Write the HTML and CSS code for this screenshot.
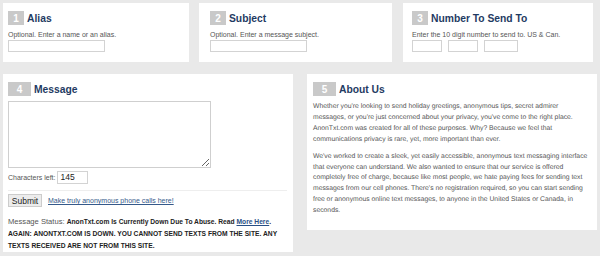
FILE: index.html
```html
<!DOCTYPE html>
<html>
<head>
<meta charset="utf-8">
<link rel="stylesheet" href="styles.css">
</head>
<body>
<div class="page">
  <div class="row-top">
    <div class="card card-sm c1">
      <div class="head"><span class="badge">1</span><span class="title">Alias</span></div>
      <div class="hint">Optional. Enter a name or an alias.</div>
      <input class="field wide" type="text">
    </div>
    <div class="card card-sm c2">
      <div class="head"><span class="badge">2</span><span class="title">Subject</span></div>
      <div class="hint">Optional. Enter a message subject.</div>
      <input class="field wide" type="text">
    </div>
    <div class="card card-sm c3">
      <div class="head"><span class="badge">3</span><span class="title">Number To Send To</span></div>
      <div class="hint">Enter the 10 digit number to send to. US &amp; Can.</div>
      <div class="phone">
        <input class="field p3" type="text">
        <input class="field p3" type="text">
        <input class="field p4" type="text">
      </div>
    </div>
  </div>
  <div class="row-bottom">
    <div class="card card-lg msg">
      <div class="head"><span class="badge big">4</span><span class="title">Message</span></div>
      <textarea class="area"></textarea>
      <div class="chars"><span class="label">Characters left:</span><input class="field count" type="text" value="145"></div>
      <div class="actions">
        <button class="submit">Submit</button>
        <a class="link" href="#">Make truly anonymous phone calls here!</a>
      </div>
      <p class="status"><span class="label">Message Status: </span><b>AnonTxt.com Is Currently Down Due To Abuse. Read <a class="more" href="#">More Here</a>. AGAIN: ANONTXT.COM IS DOWN. YOU CANNOT SEND TEXTS FROM THE SITE. ANY TEXTS RECEIVED ARE NOT FROM THIS SITE.</b></p>
    </div>
    <div class="card card-lg about">
      <div class="head"><span class="badge big">5</span><span class="title">About Us</span></div>
      <p class="copy">Whether you're looking to send holiday greetings, anonymous tips, secret admirer<br>messages, or you're just concerned about your privacy, you've come to the right place.<br>AnonTxt.com was created for all of these purposes. Why? Because we feel that<br>communications privacy is rare, yet, more important than ever.</p>
      <p class="copy">We've worked to create a sleek, yet easily accessible, anonymous text messaging interface<br>that everyone can understand. We also wanted to ensure that our service is offered<br>completely free of charge, because like most people, we hate paying fees for sending text<br>messages from our cell phones. There's no registration required, so you can start sending<br>free or anonymous online text messages, to anyone in the United States or Canada, in<br>seconds.</p>
    </div>
  </div>
</div>
</body>
</html>
```
FILE: styles.css
```css
* { box-sizing: border-box; }
html, body { margin: 0; padding: 0; }
body {
  background: #e9e9e9;
  font-family: "Liberation Sans", Arial, sans-serif;
  width: 600px;
  height: 256px;
  overflow: hidden;
}
.page { padding: 3px 0 0 3px; }
.row-top { display: flex; gap: 10px; }
.row-bottom { display: flex; gap: 14px; margin-top: 12px; align-items: flex-start; }
.card { background: #fff; }
.card-sm { height: 59px; padding-top: 8px; }
.c1 { width: 186px; padding-left: 5px; }
.c2 { width: 193px; padding-left: 11px; }
.c3 { width: 190px; padding-left: 9px; margin-left: 1px; }
.card-lg { width: 290px; padding: 8px 6px 0 5px; }
.msg { height: 178px; }
.about { height: 156px; padding-left: 6px; padding-right: 2px; overflow: hidden; }
.head { display: flex; align-items: center; gap: 3px; height: 14px; }
.badge {
  background: #c9c9c9; color: #fff; width: 16px; height: 14px;
  font-size: 10px; font-weight: bold; display: flex; align-items: center; justify-content: center;
}
.badge.big { width: 23px; }
.title { color: #1f3b63; font-weight: bold; font-size: 10.3px; }
.hint { font-size: 7px; color: #555; margin-top: 5px; line-height: 10px; }
.field {
  border: 1px solid #d3d3d3; background: #fff; height: 12px; padding: 0 2px;
  font-family: inherit; font-size: 8px; color: #222; margin: 0;
}
.wide { width: 97px; display: block; }
.phone { display: flex; gap: 6px; }
.p3 { width: 30px; }
.p4 { width: 34px; }
.area {
  display: block; width: 203px; height: 67px; margin-top: 5px;
  border: 1px solid #cfcfcf; resize: both; padding: 0;
}
.chars { display: flex; align-items: center; gap: 2px; margin-top: 2px; height: 14px; }
.label { font-size: 7px; color: #555; }
.count { width: 31px; height: 13px; font-size: 8.5px; }
.actions {
  display: flex; align-items: center; gap: 6px;
  border-top: 1px solid #eee; margin-top: 6px; padding-top: 3px;
}
.submit {
  width: 34px; height: 13px; padding: 0; border: 1px solid #ccc; background: #ececec;
  font-family: inherit; font-size: 8.5px; color: #222;
}
.link { font-size: 7px; color: #35598a; }
.status { font-size: 6.7px; line-height: 12px; margin: 9px 0 0; color: #222; }
.status .label { font-size: 7.6px; }
.more { color: #284f85; }
.copy {
  font-size: 6.8px; line-height: 10.9px; color: #555; margin: 6px 0 0;
  white-space: nowrap; text-rendering: geometricPrecision;
}
.copy + .copy { margin-top: 6px; }
```
